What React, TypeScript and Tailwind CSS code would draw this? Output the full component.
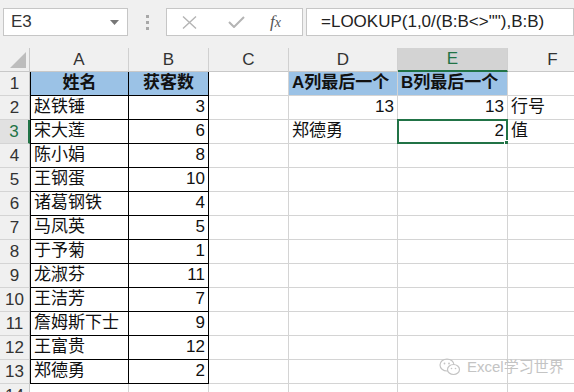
import React from "react";

const FONT = "font-['Liberation_Sans','Noto_Sans_CJK_SC',sans-serif]";

interface CellProps {
  text?: string | number;
  right?: boolean;
  center?: boolean;
  bold?: boolean;
  blue?: boolean;
  border?: string;
  selected?: boolean;
}

const rows: [string, number][] = [
  ["赵铁锤", 3],
  ["宋大莲", 6],
  ["陈小娟", 8],
  ["王钢蛋", 10],
  ["诸葛钢铁", 4],
  ["马凤英", 5],
  ["于予菊", 1],
  ["龙淑芬", 11],
  ["王洁芳", 7],
  ["詹姆斯下士", 9],
  ["王富贵", 12],
  ["郑德勇", 2],
];

function Cell({ text, right, center, bold, blue, border, selected }: CellProps) {
  return (
    <div
      className={`relative h-[24px] flex items-end pb-[1px] px-[3px] text-[17px] leading-[22px] text-[#111] whitespace-nowrap
        ${right ? "justify-end" : center ? "justify-center" : "justify-start"}
        ${bold ? "font-bold" : ""}
        ${blue ? "bg-[#9bc2e6]" : "bg-white"}
        ${border ?? "border-r border-b border-[#d4d4d4]"}`}
    >
      {text}
      {selected && (
        <>
          <div className="absolute -left-px -top-px -right-px -bottom-px border-2 border-[#217346]" />
          <div className="absolute -right-[4px] -bottom-[4px] w-[7px] h-[7px] bg-[#217346] border border-white" />
        </>
      )}
    </div>
  );
}

function RowHead({ n, active }: { n: number; active?: boolean }) {
  return (
    <div
      className={`h-[24px] flex items-center justify-center text-[17px] border-b border-[#d4d4d4]
        ${active ? "bg-[#e1e1e1] text-[#217346] border-r-2 border-r-[#217346]" : "bg-[#f0f0f0] text-[#333] border-r border-r-[#c8c8c8]"}`}
    >
      {n}
    </div>
  );
}

function ColHead({ label, active }: { label: string; active?: boolean }) {
  return (
    <div
      className={`h-[24px] flex items-center justify-center text-[17px] border-r border-[#d0d0d0]
        ${active ? "bg-[#d3d3d3] text-[#217346] border-b-2 border-b-[#217346]" : "bg-[#f0f0f0] text-[#333] border-b border-b-[#c8c8c8]"}`}
    >
      {label}
    </div>
  );
}

export default function App() {
  const tblA = "border-l border-r border-b border-black";
  const tblB = "border-r border-b border-black";

  return (
    <div className={`relative w-[574px] h-[392px] overflow-hidden bg-white ${FONT}`}>
      {/* formula bar */}
      <div className="h-[48px] bg-[#f0f0f0] flex items-start pt-[8px] pl-[3px]">
        <div className="w-[125px] h-[28px] bg-white border border-[#c6c6c6] flex items-center justify-between pl-[7px] pr-[8px]">
          <span className="text-[17px] text-[#333]">E3</span>
          <svg width="9" height="5" viewBox="0 0 9 5">
            <polygon points="0,0 9,0 4.5,5" fill="#777" />
          </svg>
        </div>
        <div className="w-[38px] h-[28px] flex flex-col items-center justify-center gap-[3px]">
          <div className="w-[3px] h-[3px] bg-[#a8a8a8]" />
          <div className="w-[3px] h-[3px] bg-[#a8a8a8]" />
          <div className="w-[3px] h-[3px] bg-[#a8a8a8]" />
        </div>
        <div className="w-[137px] h-[28px] bg-white border border-[#c6c6c6] flex items-center pl-[15px]">
          <svg width="15" height="13" viewBox="0 0 15 13">
            <path d="M1 0.5 L14 12.5 M14 0.5 L1 12.5" stroke="#b4b4b4" strokeWidth="1.4" fill="none" />
          </svg>
          <svg className="ml-[31px]" width="17" height="12" viewBox="0 0 17 12">
            <path d="M1 6 L6 11 L16 1" stroke="#b4b4b4" strokeWidth="2" fill="none" />
          </svg>
          <span className="ml-[25px] text-[17px] italic text-[#555] font-['Liberation_Serif',serif]">
            <span>f</span>
            <span className="text-[14px]">x</span>
          </span>
        </div>
        <div className="ml-[3px] flex-1 h-[28px] bg-white border border-[#c6c6c6] flex items-center pl-[14px]">
          <span className="text-[17px] text-[#222]">=LOOKUP(1,0/(B:B&lt;&gt;""),B:B)</span>
        </div>
      </div>

      {/* sheet */}
      <div className="grid grid-cols-[30px_99px_80px_80px_109px_110px_90px]">
        <div className="h-[24px] bg-[#f0f0f0] border-r border-b border-[#c8c8c8] flex items-end justify-end pr-[3px] pb-[3px]">
          <svg width="16" height="16" viewBox="0 0 16 16">
            <polygon points="16,0 16,16 0,16" fill="#bdbdbd" />
          </svg>
        </div>
        <ColHead label="A" />
        <ColHead label="B" />
        <ColHead label="C" />
        <ColHead label="D" />
        <ColHead label="E" active />
        <ColHead label="F" />

        <RowHead n={1} />
        <Cell text="姓名" center bold blue border="border-r border-b border-l border-black" />
        <Cell text="获客数" center bold blue border={tblB} />
        <Cell />
        <Cell text="A列最后一个" bold blue />
        <Cell text="B列最后一个" bold blue />
        <Cell />

        {rows.map(([name, n], i) => {
          const r = i + 2;
          return (
            <React.Fragment key={r}>
              <RowHead n={r} active={r === 3} />
              <Cell text={name} border={tblA} />
              <Cell text={n} right border={tblB} />
              <Cell />
              <Cell text={r === 2 ? 13 : r === 3 ? "郑德勇" : ""} right={r === 2} />
              <Cell text={r === 2 ? 13 : r === 3 ? 2 : ""} right selected={r === 3} />
              <Cell text={r === 2 ? "行号" : r === 3 ? "值" : ""} />
            </React.Fragment>
          );
        })}

        <RowHead n={14} />
        <Cell />
        <Cell />
        <Cell />
        <Cell />
        <Cell />
        <Cell />
      </div>

      {/* watermark */}
      <div className="absolute left-[439px] top-[356px] flex items-center gap-[6px] text-[#c4c4c4]">
        <svg width="22" height="20" viewBox="0 0 22 20">
          <ellipse cx="8" cy="8" rx="7" ry="6" fill="none" stroke="#c4c4c4" strokeWidth="1.2" />
          <ellipse cx="14.5" cy="12.5" rx="6" ry="5" fill="white" stroke="#c4c4c4" strokeWidth="1.2" />
          <circle cx="5.5" cy="6.5" r="0.9" fill="#c4c4c4" />
          <circle cx="10" cy="6.5" r="0.9" fill="#c4c4c4" />
          <circle cx="12.5" cy="11.5" r="0.8" fill="#c4c4c4" />
          <circle cx="16.5" cy="11.5" r="0.8" fill="#c4c4c4" />
        </svg>
        <span className="text-[15px]">Excel学习世界</span>
      </div>
    </div>
  );
}
